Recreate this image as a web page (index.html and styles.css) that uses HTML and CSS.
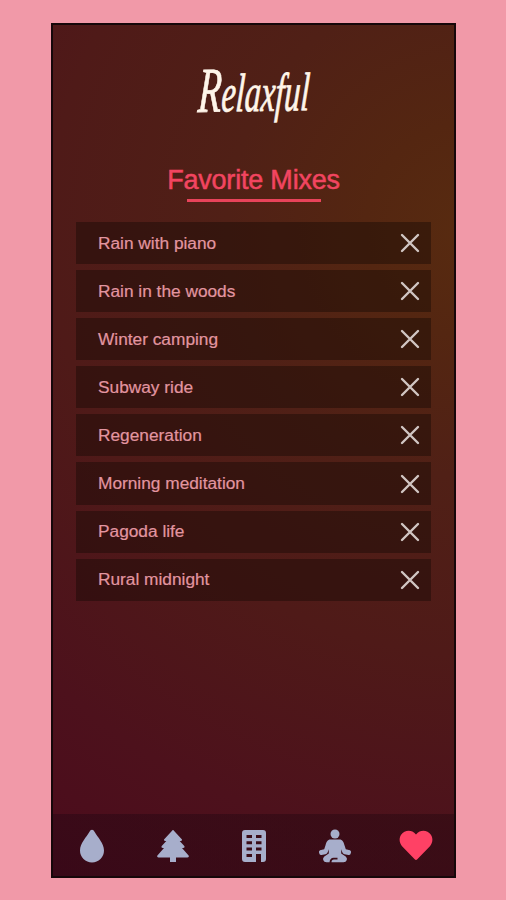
FILE: index.html
```html
<!DOCTYPE html>
<html lang="en">
<head>
<meta charset="utf-8">
<title>Relaxful</title>
<link rel="stylesheet" href="styles.css">
</head>
<body>
<svg class="defs" width="0" height="0"><symbol id="close" viewBox="0 0 20 20"><path d="M2 2L18 18M18 2L2 18" fill="none" stroke="currentColor" stroke-width="2.4" stroke-linecap="round"/></symbol></svg>
<main class="phone">
<header class="brand"><span class="logo"><span class="initial">R</span>elaxful</span></header>
<h1 class="title">Favorite Mixes</h1>
<ul class="mixes">
<li class="mix"><span>Rain with piano</span><svg class="close"><use href="#close"/></svg></li>
<li class="mix"><span>Rain in the woods</span><svg class="close"><use href="#close"/></svg></li>
<li class="mix"><span>Winter camping</span><svg class="close"><use href="#close"/></svg></li>
<li class="mix"><span>Subway ride</span><svg class="close"><use href="#close"/></svg></li>
<li class="mix"><span>Regeneration</span><svg class="close"><use href="#close"/></svg></li>
<li class="mix"><span>Morning meditation</span><svg class="close"><use href="#close"/></svg></li>
<li class="mix"><span>Pagoda life</span><svg class="close"><use href="#close"/></svg></li>
<li class="mix"><span>Rural midnight</span><svg class="close"><use href="#close"/></svg></li>
</ul>
<nav class="tabs">
<svg class="tab" viewBox="0 0 34 34"><path d="M17 .8C18.300 .8 18.800 1.600 19.500 2.800C22.500 8 29 14.500 29 21.500A12 11.900 0 0 1 5 21.500C5 14.500 11.500 8 14.500 2.800C15.200 1.600 15.700 .8 17 .8Z"/></svg>
<svg class="tab" viewBox="0 0 34 34"><path d="M17 .7L26 10.600Q26.500 12 24.800 12H23.700L28.500 17.300Q29 19 27.200 19H26L32.800 26.700Q33.300 28.500 31.500 28.500H20V33H14V28.500H2.500Q.7 28.500 1.200 26.700L8 19H6.800Q5 19 5.500 17.300L10.300 12H9.200Q7.500 12 8 10.600Z"/></svg>
<svg class="tab" viewBox="0 0 34 34"><path fill-rule="evenodd" d="M8 1H26Q29 1 29 4V30Q29 33 26 33H24V25H19V33H8Q5 33 5 30V4Q5 1 8 1ZM9.500 6V9H15V6ZM19 6V9H24.500V6ZM9.500 12.300V15.300H15V12.300ZM19 12.300V15.300H24.500V12.300ZM9.500 18.600V21.600H15V18.600ZM19 18.600V21.600H24.500V18.600ZM9.500 25V28H15V25Z"/></svg>
<svg class="tab" viewBox="0 0 34 34"><circle cx="17" cy="5" r="4.500"/><path d="M12.500 10.500H21.500C24.500 10.500 25.700 13 26.400 16L27.800 20.300L32 21.300Q33.400 22 33 23.500L32.400 25.200Q32 26.200 30.500 26L26.500 25.200Q24.700 24.800 24.200 23L23.200 20.300V24.500L27.700 27.500Q29.500 29 28.800 31Q28 33.300 25.500 33.300H13.500Q13.500 30.500 16 30.500H19.500V28.800H15.500Q12 28.800 11.500 33.300H8.500Q6 33.300 5.200 31Q4.500 29 6.300 27.500L10.800 24.500V20.300L9.800 23Q9.300 24.800 7.500 25.200L3.500 26Q2 26.200 1.600 25.200L1 23.500Q.6 22 2 21.300L6.200 20.300L7.600 16C8.300 13 9.500 10.500 12.500 10.500Z"/></svg>
<svg class="tab active" viewBox="0 0 34 34"><path d="M17 5.500C12-.3 5.200 1.700 2.300 5.500C-.5 9.500 .4 14.500 3.300 17.500L15.700 30.300Q17 31.700 18.300 30.300L30.700 17.500C33.600 14.500 34.500 9.500 31.700 5.500C28.800 1.700 22 -.3 17 5.500Z"/></svg>
</nav>
</main>
</body>
</html>
```
FILE: styles.css
```css
* { box-sizing: border-box; }
body {
  margin: 0;
  height: 900px;
  padding: 23px 50px 22px 51px;
  background: #f199a8;
  font-family: "Liberation Sans", Arial, sans-serif;
  overflow: hidden;
}
.defs { display: block; }
.phone {
  height: 855px;
  border: 2px solid #16070a;
  display: flex;
  flex-direction: column;
  background: radial-gradient(circle at 105% 24%, #582b10 0, #542611 14%, #502016 32%, #4f1a18 55%, #4d111c 80%, #4b0b1c 100%);
}
.brand {
  height: 137px;
  display: flex;
  justify-content: center;
  padding-top: 33px;
}
.logo {
  width: 200px;
  height: 70px;
  font: italic 54px/70px "Liberation Serif", serif;
  color: #fff5e9;
  -webkit-text-stroke: 0.8px #fff5e9;
  transform: rotate(-1deg) scaleX(.6) skewX(-7deg);
  text-align: center;
  white-space: nowrap;
}
.initial { font-size: 64px; line-height: 60px; }
.title {
  align-self: center;
  margin: 0;
  height: 60px;
  color: #f24560;
  font-size: 27px;
  font-weight: 400;
  line-height: 36px;
  letter-spacing: -.2px;
  -webkit-text-stroke: .5px #f24560;
}
.title::after {
  content: "";
  display: block;
  width: 134px;
  height: 3px;
  margin: 1px auto 0;
  background: #e8435a;
}
.mixes {
  display: flex;
  flex-direction: column;
  gap: 6px;
  list-style: none;
  margin: 0;
  padding: 0 23px;
}
.mix {
  height: 42.1px;
  padding: 0 11px 0 22px;
  display: flex;
  align-items: center;
  justify-content: space-between;
  background: rgba(20, 10, 5, .43);
  color: #e295a0;
  font-size: 17.3px;
  -webkit-text-stroke: .2px #e295a0;
}
.close { width: 20px; height: 20px; color: #d1c6c3; }
.tabs {
  height: 62px;
  margin-top: auto;
  padding: 2px 21px 0 22px;
  display: flex;
  align-items: center;
  justify-content: space-between;
  background: linear-gradient(90deg, rgba(30, 5, 18, .4), rgba(40, 8, 16, .5));
}
.tab { width: 34px; height: 34px; fill: #a7aecb; }
.tab.active { fill: #ff4165; }
```
